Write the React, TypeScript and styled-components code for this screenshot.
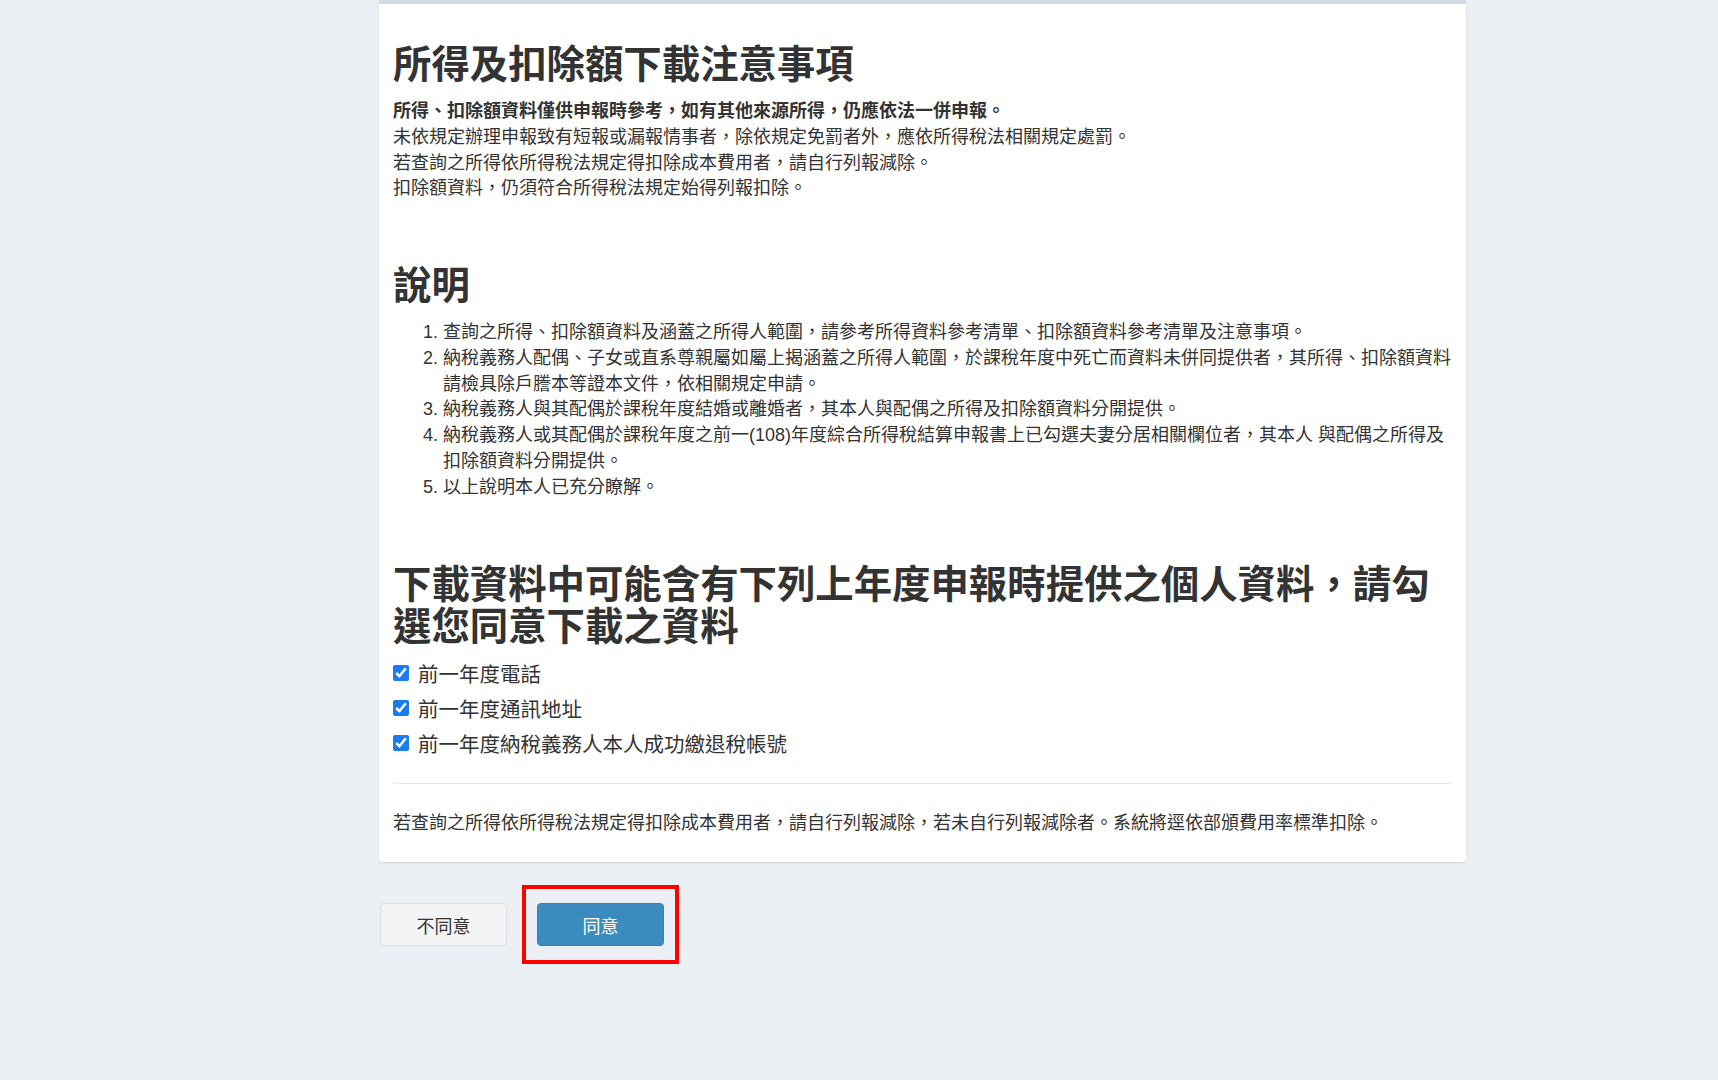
import React from 'react';
import styled, { createGlobalStyle } from 'styled-components';

const GlobalStyle = createGlobalStyle`
  body {
    margin: 0;
    background-color: #eceff4;
    color: #333;
    font-family: 'Liberation Sans', 'Noto Sans CJK TC', sans-serif;
  }
`;

const notices = [
  '未依規定辦理申報致有短報或漏報情事者，除依規定免罰者外，應依所得稅法相關規定處罰。',
  '若查詢之所得依所得稅法規定得扣除成本費用者，請自行列報減除。',
  '扣除額資料，仍須符合所得稅法規定始得列報扣除。',
];

const explains = [
  '查詢之所得、扣除額資料及涵蓋之所得人範圍，請參考所得資料參考清單、扣除額資料參考清單及注意事項。',
  '納稅義務人配偶、子女或直系尊親屬如屬上揭涵蓋之所得人範圍，於課稅年度中死亡而資料未併同提供者，其所得、扣除額資料請檢具除戶謄本等證本文件，依相關規定申請。',
  '納稅義務人與其配偶於課稅年度結婚或離婚者，其本人與配偶之所得及扣除額資料分開提供。',
  '納稅義務人或其配偶於課稅年度之前一(108)年度綜合所得稅結算申報書上已勾選夫妻分居相關欄位者，其本人 與配偶之所得及扣除額資料分開提供。',
  '以上說明本人已充分瞭解。',
];

const options = ['前一年度電話', '前一年度通訊地址', '前一年度納稅義務人本人成功繳退稅帳號'];

export default function App() {
  return (
    <>
      <GlobalStyle />
      <Page>
        <Card>
          <Heading $top={40}>所得及扣除額下載注意事項</Heading>
          <Paragraph $bold>所得、扣除額資料僅供申報時參考，如有其他來源所得，仍應依法一併申報。</Paragraph>
          {notices.map((text) => (
            <Paragraph key={text}>{text}</Paragraph>
          ))}

          <Heading $top={63}>說明</Heading>
          <ExplainList>
            {explains.map((text) => (
              <li key={text}>{text}</li>
            ))}
          </ExplainList>

          <Heading $top={64} $bottom={7}>
            下載資料中可能含有下列上年度申報時提供之個人資料，請勾選您同意下載之資料
          </Heading>
          <OptionList>
            {options.map((text) => (
              <OptionRow key={text}>
                <input type='checkbox' defaultChecked />
                {text}
              </OptionRow>
            ))}
          </OptionList>

          <Divider />
          <Paragraph>若查詢之所得依所得稅法規定得扣除成本費用者，請自行列報減除，若未自行列報減除者。系統將逕依部頒費用率標準扣除。</Paragraph>
        </Card>

        <ActionBar>
          <Button>不同意</Button>
          <Highlight>
            <Button $primary>同意</Button>
          </Highlight>
        </ActionBar>
      </Page>
    </>
  );
}

const Page = styled.div`
  width: 1087px;
  margin-left: 379px;
  padding-bottom: 40px;
`;

const Card = styled.div`
  background-color: #fff;
  border-top: 4px solid #d6dae2;
  border-radius: 0 0 4px 4px;
  box-shadow: 0 1px 2px rgba(0, 0, 0, 0.12);
  padding: 0 14px 26px;
`;

const Heading = styled.h1<{ $top: number; $bottom?: number }>`
  margin: ${({ $top, $bottom = 13 }) => `${$top}px 0 ${$bottom}px`};
  font-size: 38.4px;
  line-height: 1.1;
  font-weight: 700;
  color: #333;
`;

const Paragraph = styled.p<{ $bold?: boolean }>`
  margin: 0;
  font-size: 18px;
  line-height: 25.7px;
  font-weight: ${({ $bold }) => ($bold ? 700 : 400)};
`;

const ExplainList = styled.ol`
  margin: 0;
  padding-left: 50px;
  font-size: 18px;
  line-height: 25.7px;
`;

const OptionList = styled.div`
  display: flex;
  flex-direction: column;
`;

const OptionRow = styled.label`
  display: flex;
  align-items: center;
  gap: 9px;
  height: 35px;
  font-size: 20.5px;

  input {
    width: 16px;
    height: 16px;
    margin: 0;
    accent-color: #1a7cf0;
  }
`;

const Divider = styled.hr`
  margin: 22px 0 27px;
  border: none;
  border-top: 1px solid #e9e9e9;
`;

const ActionBar = styled.div`
  display: flex;
  align-items: center;
  gap: 15px;
  margin-top: 23px;
  padding-left: 1px;
`;

const Highlight = styled.div`
  border: 4px solid #ff0000;
  padding: 14px 11px;
`;

const Button = styled.button<{ $primary?: boolean }>`
  width: 127px;
  height: 43px;
  border-radius: 4px;
  font-family: inherit;
  font-size: 18px;
  cursor: pointer;
  color: ${({ $primary }) => ($primary ? '#fff' : '#333')};
  background-color: ${({ $primary }) => ($primary ? '#3c8bbf' : '#f4f4f4')};
  border: 1px solid ${({ $primary }) => ($primary ? '#3680b2' : '#dedede')};
`;
